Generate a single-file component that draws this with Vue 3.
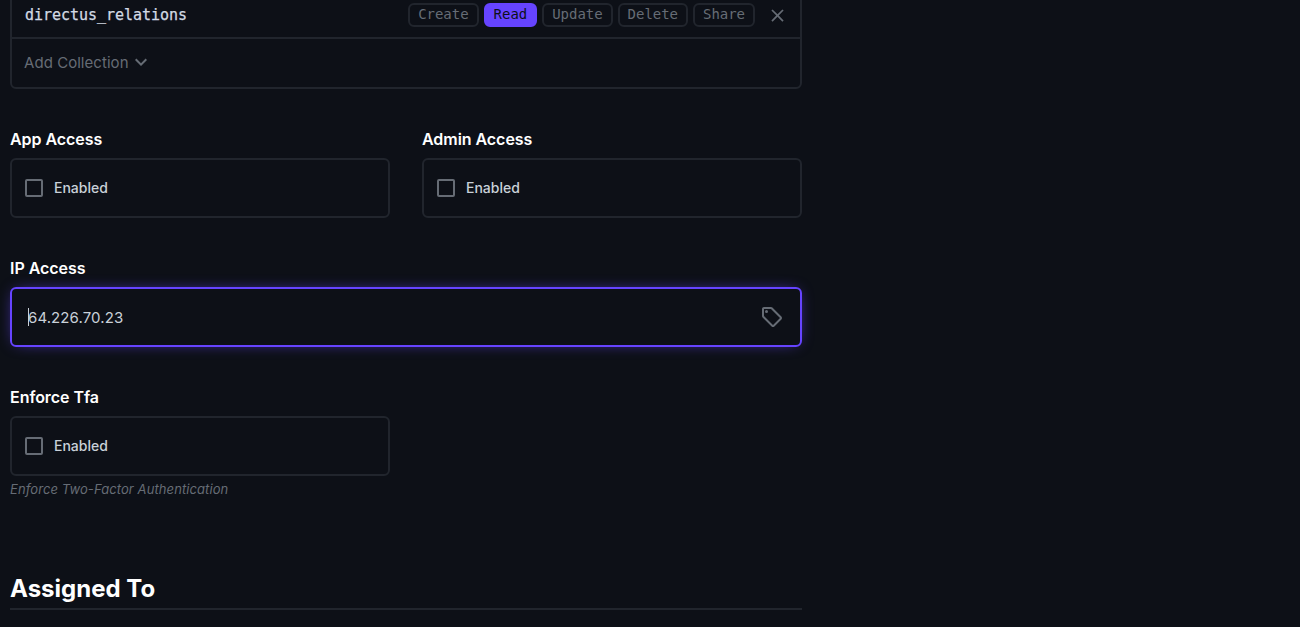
<template>
  <div class="page">
    <div class="form">
      <!-- bảng quyền, phần trên đã bị cuộn khỏi màn hình -->
      <div class="permissions">
        <div class="perm-row">
          <span class="collection">directus_relations</span>
          <div class="actions">
            <button
              v-for="action in actions"
              :key="action"
              class="pill"
              :class="{ active: action === 'Read' }"
            >
              {{ action }}
            </button>
          </div>
          <svg class="close" viewBox="0 0 24 24" width="21" height="21">
            <path
              d="M19 6.41L17.59 5 12 10.59 6.41 5 5 6.41 10.59 12 5 17.59 6.41 19 12 13.41 17.59 19 19 17.59 13.41 12z"
            />
          </svg>
        </div>
        <div class="add-row">
          <span>Add Collection</span>
          <svg class="chevron" viewBox="0 0 24 24" width="24" height="24">
            <path d="M16.59 8.59L12 13.17 7.41 8.59 6 10l6 6 6-6z" />
          </svg>
        </div>
      </div>

      <div class="fields">
        <div v-for="field in toggles" :key="field" class="field">
          <div class="label">{{ field }}</div>
          <div class="box">
            <span class="checkbox"></span>
            <span class="enabled">Enabled</span>
          </div>
        </div>

        <div class="field full">
          <div class="label">IP Access</div>
          <div class="box focused">
            <span class="caret"></span>
            <span class="value">64.226.70.23</span>
            <svg class="tag" viewBox="0 0 24 24" width="24" height="24">
              <path
                d="M21.41 11.58l-9-9C12.05 2.22 11.55 2 11 2H4c-1.1 0-2 .9-2 2v7c0 .55.22 1.05.59 1.42l9 9c.36.36.86.58 1.41.58s1.05-.22 1.41-.59l7-7c.37-.36.59-.86.59-1.41s-.23-1.06-.59-1.42zM13 20.01L4 11V4h7v-.01l9 9-7 7.02z"
              />
              <circle cx="6.5" cy="6.5" r="1.5" />
            </svg>
          </div>
        </div>

        <div class="field">
          <div class="label">Enforce Tfa</div>
          <div class="box">
            <span class="checkbox"></span>
            <span class="enabled">Enabled</span>
          </div>
          <div class="hint">Enforce Two-Factor Authentication</div>
        </div>
      </div>

      <h2 class="section-title">Assigned To</h2>
    </div>
  </div>
</template>

<script setup>
const actions = ['Create', 'Read', 'Update', 'Delete', 'Share']
const toggles = ['App Access', 'Admin Access']
</script>

<style>
html,
body {
  background: #0d1017;
}
</style>

<style scoped>
.page {
  height: 627px;
  overflow: hidden;
  background: #0d1017;
  font-family: Inter, 'Noto Sans', sans-serif;
  color: #c9d1d9;
}

.form {
  width: 792px;
  margin: -13px 0 0 10px;
}

.permissions {
  border: 2px solid #21252d;
  border-radius: 6px;
}

.perm-row {
  display: flex;
  align-items: center;
  height: 44px;
  padding: 4px 12px 0 13px;
  border-bottom: 2px solid #21252d;
}

.collection {
  font-family: 'DejaVu Sans Mono', 'Liberation Mono', monospace;
  font-size: 15px;
  letter-spacing: -0.03px;
  -webkit-text-stroke: 0.25px #d3dae4;
  color: #d3dae4;
}

.actions {
  display: flex;
  gap: 5px;
  margin-left: auto;
}

.pill {
  height: 24px;
  padding: 0 8px 2px;
  border: 2px solid #21252d;
  border-radius: 6px;
  background: transparent;
  font-family: 'DejaVu Sans Mono', 'Liberation Mono', monospace;
  font-size: 14px;
  letter-spacing: -0.03px;
  line-height: 18px;
  color: #666c75;
}

.pill.active {
  background: #6644ff;
  border-color: #6644ff;
  color: #0d1017;
}

.close {
  margin-left: 12px;
  fill: #666c75;
}

.add-row {
  display: flex;
  align-items: center;
  height: 46px;
  padding: 0 0 2px 12px;
  font-size: 15px;
  letter-spacing: 0.05px;
  color: #666c75;
}

.chevron {
  fill: #666c75;
}

.fields {
  display: grid;
  grid-template-columns: 380px 380px;
  column-gap: 32px;
  row-gap: 40px;
  margin-top: 40px;
}

.full {
  grid-column: 1 / -1;
}

.label {
  height: 21px;
  margin-bottom: 8px;
  font-size: 16px;
  letter-spacing: -0.05px;
  line-height: 21px;
  font-weight: 600;
  color: #ffffff;
}

.box {
  display: flex;
  align-items: center;
  height: 60px;
  box-sizing: border-box;
  padding: 0 16px 0 13px;
  border: 2px solid #21252d;
  border-radius: 6px;
}

.box.focused {
  padding-left: 16px;
  border-color: #6644ff;
  box-shadow: 0 0 16px -6px #6644ff;
}

.checkbox {
  width: 18px;
  height: 18px;
  box-sizing: border-box;
  border: 2px solid #666c75;
  border-radius: 2px;
}

.enabled {
  margin-left: 11px;
  padding-bottom: 1px;
  font-size: 14px;
  font-weight: 500;
  color: #c9d1d9;
}

.caret {
  width: 1px;
  height: 18px;
  margin-right: -1px;
  background: #c9d1d9;
}

.value {
  font-size: 15px;
  letter-spacing: 0.1px;
  color: #c9d1d9;
}

.tag {
  margin-left: auto;
  fill: #666c75;
}

.hint {
  margin-top: 4px;
  font-size: 13px;
  letter-spacing: 0.09px;
  line-height: 18px;
  font-style: italic;
  color: #666c75;
}

.section-title {
  margin: 76px 0 0;
  padding-bottom: 5px;
  border-bottom: 2px solid #21252d;
  font-size: 24px;
  line-height: 29px;
  font-weight: 700;
  color: #ffffff;
}
</style>
